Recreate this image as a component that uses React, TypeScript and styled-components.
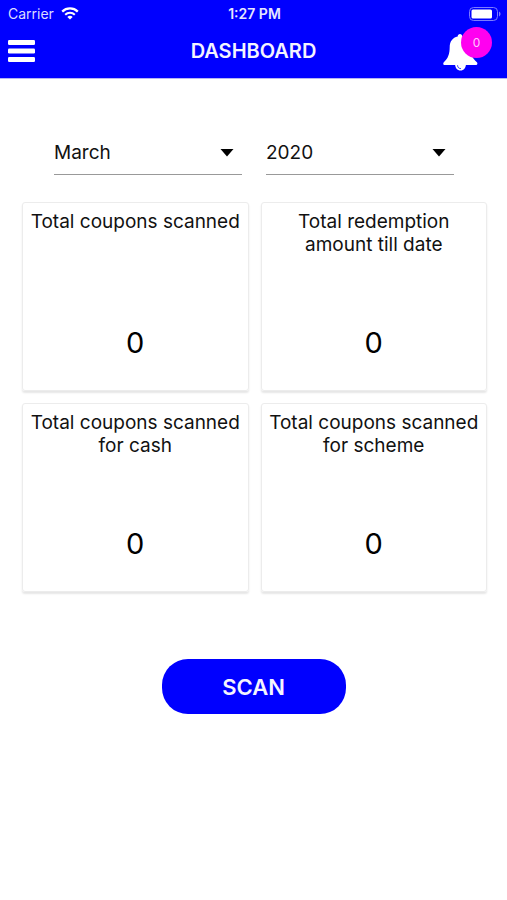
import React from "react";
import styled, { createGlobalStyle } from "styled-components";

const GlobalStyle = createGlobalStyle`
  * { box-sizing: border-box; }
  body {
    margin: 0;
    background: #fff;
    color: #111;
    font-family: Inter, "Liberation Sans", sans-serif;
  }
  button, select { font: inherit; color: inherit; }
`;

const Screen = styled.div`
  min-height: 100vh;
  background: #fff;
`;

const Header = styled.header`
  background: #0000ff;
  color: #fff;
  border-bottom: 1px solid #b4b4f4;
`;

const Columns = styled.div`
  display: grid;
  grid-template-columns: 1fr auto 1fr;
  align-items: center;
`;

const StatusBar = styled(Columns)`
  height: 27px;
  padding: 0 6px 0 8px;
  font-size: 14px;
  line-height: 20px;
`;

const Carrier = styled.span`
  display: flex;
  align-items: center;
  gap: 7px;
  color: #dcdcff;
`;

const Clock = styled.time`
  font-size: 14px;
  font-weight: 600;
  color: #e6e6ff;
`;

const Battery = styled.svg`
  justify-self: end;
`;

const TitleBar = styled(Columns)`
  height: 51px;
  padding: 0 8px 3px;
`;

const Title = styled.h1`
  margin: 0;
  font-size: 20px;
  line-height: 24px;
  font-weight: 600;
  color: #f4f4ff;
`;

const IconButton = styled.button`
  position: relative;
  display: flex;
  padding: 0;
  border: 0;
  background: none;
  cursor: pointer;
`;

const BellButton = styled(IconButton)`
  justify-self: end;
  align-self: start;
  align-items: flex-end;
  width: 49px;
  height: 44px;
  margin-right: 7px;
`;

const Badge = styled.span`
  position: absolute;
  top: 0;
  right: 0;
  width: 31px;
  height: 31px;
  border-radius: 50%;
  background: #ff00f0;
  color: #ffc8fc;
  font-size: 12px;
  line-height: 31px;
  text-align: center;
`;

const Filters = styled.div`
  display: grid;
  grid-template-columns: 1fr 1fr;
  gap: 24px;
  margin: 52px 53px 0 54px;
`;

const Field = styled.label`
  display: flex;
  position: relative;
  border-bottom: 1px solid #999;
`;

const Select = styled.select`
  appearance: none;
  width: 100%;
  height: 43px;
  padding: 0 32px 0 0;
  border: 0;
  border-radius: 0;
  background: transparent;
  font-size: 19px;
`;

const Caret = styled.svg`
  position: absolute;
  right: 8px;
  top: 18px;
  pointer-events: none;
`;

const Cards = styled.main`
  display: grid;
  grid-template-columns: 1fr 1fr;
  gap: 12px;
  padding: 27px 20px 0 22px;
`;

const Card = styled.section`
  display: flex;
  flex-direction: column;
  justify-content: space-between;
  min-height: 189px;
  padding: 7px 4px 29px;
  border: 1px solid #ececec;
  border-radius: 3px;
  box-shadow: 0 2px 2px rgba(0, 0, 0, 0.1);
  text-align: center;
`;

const CardTitle = styled.h2`
  margin: 0;
  font-size: 19px;
  line-height: 23px;
  font-weight: 400;
`;

const CardValue = styled.p`
  margin: 0;
  font-size: 29px;
  line-height: 36px;
  color: #000;
`;

const Actions = styled.div`
  display: flex;
  justify-content: center;
  padding: 67px 0 40px;
`;

const ScanButton = styled.button`
  min-width: 184px;
  height: 55px;
  border: 0;
  border-radius: 26px;
  background: #0000ff;
  color: #f4f4ff;
  font-size: 22px;
  font-weight: 600;
  cursor: pointer;
`;

const months = [
  "January", "February", "March", "April", "May", "June",
  "July", "August", "September", "October", "November", "December",
];
const years = ["2019", "2020", "2021"];

const stats = [
  { title: "Total coupons scanned", value: 0 },
  { title: "Total redemption amount till date", value: 0 },
  { title: "Total coupons scanned for cash", value: 0 },
  { title: "Total coupons scanned for scheme", value: 0 },
];

function Picker({ label, options, initial }: { label: string; options: string[]; initial: string }) {
  return (
    <Field>
      <Select aria-label={label} defaultValue={initial}>
        {options.map((o) => (
          <option key={o}>{o}</option>
        ))}
      </Select>
      <Caret width="14" height="8" viewBox="0 0 14 8" aria-hidden="true">
        <path d="M.5 0h13L7 7.5z" fill="#000" />
      </Caret>
    </Field>
  );
}

export default function App() {
  return (
    <Screen>
      <GlobalStyle />
      <Header>
        <StatusBar>
          <Carrier>
            Carrier
            <svg width="18" height="13" viewBox="0 0 18 13" fill="none" aria-hidden="true">
              <path d="M1.2 4.6a11.2 11.2 0 0 1 15.6 0" stroke="#fff" strokeWidth="2.3" />
              <path d="M4.2 7.7a7 7 0 0 1 9.6 0" stroke="#fff" strokeWidth="2.1" />
              <path d="M9 12.6 6.3 9.9a4 4 0 0 1 5.4 0z" fill="#fff" />
            </svg>
          </Carrier>
          <Clock>1:27 PM</Clock>
          <Battery width="32" height="14" viewBox="0 0 32 14" aria-hidden="true">
            <rect x=".5" y=".5" width="28" height="13" rx="4" fill="none" stroke="#7c7cff" />
            <rect x="2.5" y="2.5" width="20.5" height="9" rx="1.5" fill="#fff" />
            <path d="M30 4.6c2 .8 2 4 0 4.8z" fill="#7c7cff" />
          </Battery>
        </StatusBar>
        <TitleBar>
          <IconButton aria-label="Open menu">
            <svg width="27" height="24" viewBox="0 0 27 24" fill="#fff" aria-hidden="true">
              <rect y="1" width="27" height="5" rx="1.3" />
              <rect y="9.5" width="27" height="5" rx="1.3" />
              <rect y="18" width="27" height="5" rx="1.3" />
            </svg>
          </IconButton>
          <Title>DASHBOARD</Title>
          <BellButton aria-label="Notifications">
            <svg width="35" height="38" viewBox="0 0 35 38" aria-hidden="true">
              <path
                d="M17 1c1.300 0 2.300 1 2.300 2.400C24.500 4.500 27.300 8.500 27.300 14c0 7 2.200 11.500 6.600 15.300.9.800.6 2.700-.8 2.700H1.400C0 32 0 30.100.8 29.300 5 25.500 6.700 21 6.700 14c0-5.500 2.800-9.500 8-10.600C14.700 2 15.700 1 17 1z"
                fill="#fff"
              />
              <path d="M12 31h11c0 3.800-2.400 6.500-5.500 6.500S12 34.800 12 31z" fill="#fff" />
              <path d="M14.600 32.700c.1 1.700 1.200 2.800 2.900 2.900" fill="none" stroke="#0000ff" strokeWidth=".8" strokeLinecap="round" />
            </svg>
            <Badge>0</Badge>
          </BellButton>
        </TitleBar>
      </Header>
      <Filters>
        <Picker label="Month" options={months} initial="March" />
        <Picker label="Year" options={years} initial="2020" />
      </Filters>
      <Cards>
        {stats.map((s) => (
          <Card key={s.title}>
            <CardTitle>{s.title}</CardTitle>
            <CardValue>{s.value}</CardValue>
          </Card>
        ))}
      </Cards>
      <Actions>
        <ScanButton>SCAN</ScanButton>
      </Actions>
    </Screen>
  );
}
